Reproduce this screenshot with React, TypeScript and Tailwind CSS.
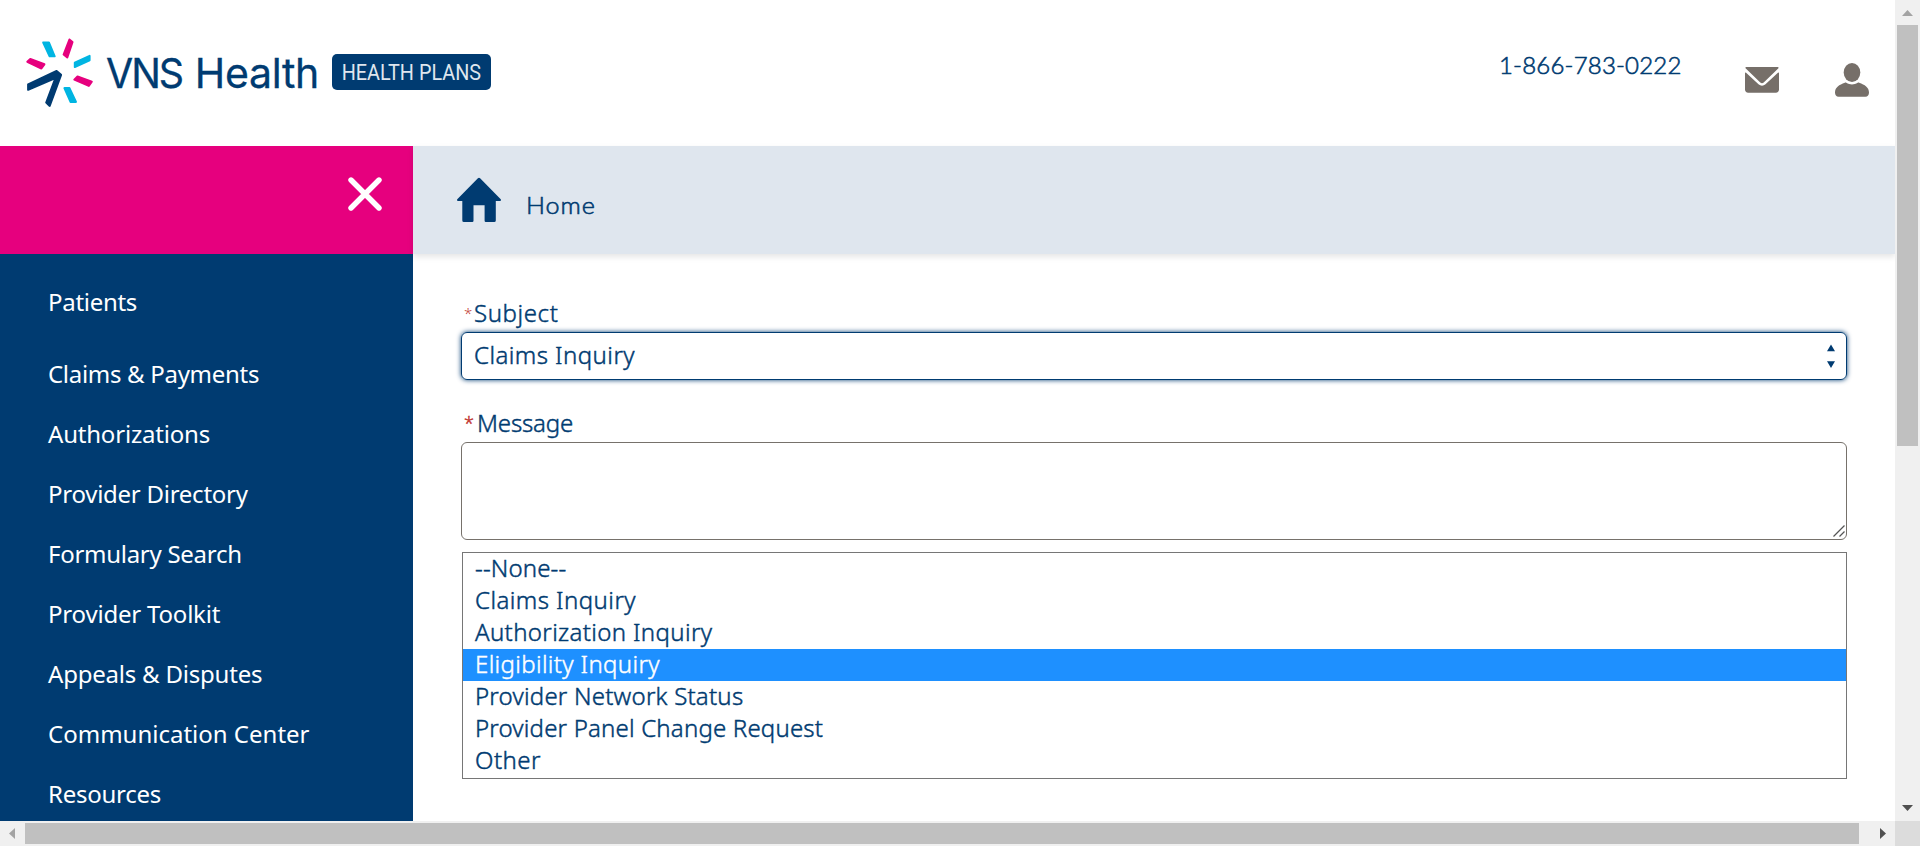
const navItems = [
  { label: 'Patients', style: 'mb-3 tracking-[-0.3px]' },
  { label: 'Claims & Payments', style: 'tracking-[-0.3px]' },
  { label: 'Authorizations', style: 'tracking-[-0.2px]' },
  { label: 'Provider Directory', style: 'tracking-[-0.26px]' },
  { label: 'Formulary Search', style: 'tracking-[-0.28px]' },
  { label: 'Provider Toolkit', style: 'tracking-[-0.2px]' },
  { label: 'Appeals & Disputes', style: 'tracking-[-0.21px]' },
  { label: 'Communication Center', style: 'tracking-[0px]' },
  { label: 'Resources', style: 'tracking-[-0.25px]' },
];

const options = [
  { label: '--None--', style: 'tracking-[0.16px]' },
  { label: 'Claims Inquiry', style: 'tracking-[0.45px]' },
  { label: 'Authorization Inquiry', style: 'tracking-[0.36px]' },
  { label: 'Eligibility Inquiry', style: 'tracking-[0.36px] bg-[#1e90ff] text-white' },
  { label: 'Provider Network Status', style: 'tracking-[0.23px]' },
  { label: 'Provider Panel Change Request', style: 'tracking-[0.19px]' },
  { label: 'Other', style: 'tracking-[0.45px]' },
];

function LogoMark() {
  return (
    <svg className="h-[71px] w-[70px]" viewBox="0 0 70 71" strokeLinejoin="round" strokeWidth="2">
      <g fill="#00b5e2" stroke="#00b5e2">
        <path d="M18.200 5.500h5.700l5.800 13.800h-5.100z" />
        <path d="M64.600 18.800v4.500L49.800 30v-4.300z" />
        <path d="M39.400 51.100h5.100l6.500 13.800h-5.500z" />
      </g>
      <g fill="#e6007e" stroke="#e6007e">
        <path d="M44.400 2.500l3.100 2.600-5.200 15.400-3.700-3z" />
        <path d="M2.300 24.800l3-2.900 14.100 5.400-3 4.200z" />
        <path d="M49.300 42.700l3.200-3.200 14.300 5.200-3 4.200z" />
      </g>
      <path fill="#003b71" stroke="#003b71" d="M3.100 47.500L31.600 34l4.500 3.800-11.400 31.100-3.500-3.300 9.200-24.600L3.100 52.800z" />
    </svg>
  );
}

function Header() {
  return (
    <header className="flex h-[146px] shrink-0 items-start">
      <div className="ml-[25px] mt-[37px] flex items-start">
        <LogoMark />
        <div className="ml-[11px] mt-[8px] flex w-[213px] whitespace-pre font-['Inter',sans-serif] text-[41px] leading-[56px] [-webkit-text-stroke:0.3px]">
          <span className="w-[89px] origin-left scale-x-[0.96] tracking-[-2.1px]">VNS</span>
          <span className="tracking-[-0.3px]">Health</span>
        </div>
        <div className="ml-[13px] mt-[17px] flex h-9 w-[159px] items-center justify-center rounded-[5px] bg-[#003b71] font-['Roboto',sans-serif] text-[22px] text-[#dfe6ee]">
          <span className="scale-x-[0.9] whitespace-nowrap pt-px">HEALTH PLANS</span>
        </div>
      </div>
      <div className="ml-auto flex">
        <span className="mr-[63px] mt-[48px] w-[183px] whitespace-nowrap font-['Lato',sans-serif] text-[24px] font-light leading-[34px] tracking-[0.2px] [-webkit-text-stroke:0.6px]">
          1-866-783-0222
        </span>
        <svg className="mr-[56px] mt-[66px] h-[28px] w-[34px]" viewBox="0 0 34 28" fill="#766f69">
          <path d="M1.300.900h31.400c.9 0 1.300.8.500 1.500L18.700 16.500c-1 1-2.400 1-3.400 0L.800 2.400C0 1.700.400.900 1.300.900z" />
          <path d="M0 7.200c0-.7.600-.9 1.100-.400L13.500 18.300c2 1.900 5 1.900 7 0L32.900 6.800c.5-.500 1.100-.3 1.100.4v16.300c0 1.900-1.300 3.200-3.200 3.200H3.200C1.300 26.700 0 25.400 0 23.500z" />
        </svg>
        <svg className="mr-[26px] mt-[63px] h-[34px] w-[34px]" viewBox="0 0 34 34" fill="#766f69">
          <ellipse cx="17" cy="9.500" rx="8.300" ry="9.500" />
          <path d="M11.300 19.800c3.700 2.300 7.700 2.300 11.400 0 .5-.3 1-.2 1.500 0 5.500 2 9.800 4.600 9.800 9.700 0 2.600-1.300 4.200-3.600 4.200H3.600C1.300 33.700 0 32.100 0 29.500c0-5.100 4.300-7.700 9.800-9.700.5-.2 1-.3 1.500 0z" />
        </svg>
      </div>
    </header>
  );
}

function Sidebar() {
  return (
    <aside className="flex w-[413px] shrink-0 flex-col bg-[#003b71]">
      <div className="flex h-[108px] shrink-0 justify-end bg-[#e6007e] pr-[31px] pt-[31px]">
        <svg className="h-[34px] w-[34px]" viewBox="0 0 34 34" stroke="#fff" strokeWidth="5.400" strokeLinecap="round">
          <path d="M3 3l28 28M31 3L3 31" />
        </svg>
      </div>
      <nav className="mt-[18px] flex flex-col pl-12 text-white">
        {navItems.map((item) => (
          <a key={item.label} className={`h-[60px] shrink-0 whitespace-nowrap leading-[60px] ${item.style}`}>
            {item.label}
          </a>
        ))}
      </nav>
    </aside>
  );
}

function Main() {
  return (
    <main className="flex min-w-0 flex-1 flex-col">
      <div className="flex h-[108px] shrink-0 items-start bg-[#dfe6ee] pl-[44px] shadow-[0_3px_6px_rgba(0,0,0,0.1)]">
        <svg className="mt-[31px] h-[46px] w-[44px]" viewBox="0 0 44 46" fill="#003b71">
          <path d="M20.900 1.300q1.100-1 2.200 0L43.500 22c.9.900.6 1.900-.5 1.900h-4.200v19.500q0 1.600-1.600 1.600h-8.400q-1.200 0-1.200-1.200V28.300H16.500v15.500q0 1.200-1.200 1.200H6.900q-1.600 0-1.600-1.600V23.900H1C-.1 23.900-.4 22.900.500 22z" />
        </svg>
        <span className="ml-[24px] mt-[42px] origin-left scale-x-[1.05] pl-px font-['Lato',sans-serif] text-[24px] font-light leading-[34px] tracking-[0.9px] [-webkit-text-stroke:0.6px]">
          Home
        </span>
      </div>
      <form className="flex flex-col px-12 pt-10 font-light [-webkit-text-stroke:0.45px]">
        <label className="flex h-[38px] pl-[3px] leading-[38px]">
          <span className="w-[10px] text-[15px] text-[#c23934] [-webkit-text-stroke:0px]">*</span>
          <span className="tracking-[0.6px]">Subject</span>
        </label>
        <div className="flex h-12 items-center justify-between rounded-[6px] border border-[#003b71] pl-3 pr-[11px] shadow-[0_0_5px_#003b71]">
          <span className="pb-[2px] tracking-[0.45px]">Claims Inquiry</span>
          <svg className="h-6 w-2" viewBox="0 0 8 24" fill="#003b71">
            <path d="M4 .500L8 7.300H0zM4 24L0 17.200h8z" />
          </svg>
        </div>
        <label className="mt-6 flex h-[38px] pl-[3px] leading-[38px]">
          <span className="w-[13px] text-[18px] text-[#c23934]">*</span>
          <span className="tracking-[-0.15px]">Message</span>
        </label>
        <div className="flex h-[98px] items-end justify-end rounded-[6px] border border-[#76716b] pb-[2px] pr-[1px]">
          <svg className="h-3 w-3" viewBox="0 0 12 12" stroke="#555" strokeWidth="1.300">
            <path d="M.500 11.500l11-11M6.500 11.500l5-5" />
          </svg>
        </div>
        <ul className="ml-px mt-3 flex h-[227px] flex-col border border-[#767676]">
          {options.map((option) => (
            <li key={option.label} className={`h-8 shrink-0 whitespace-nowrap pl-3 leading-[30px] ${option.style}`}>
              {option.label}
            </li>
          ))}
        </ul>
      </form>
    </main>
  );
}

export default function App() {
  return (
    <div className="grid h-[846px] w-[1920px] grid-cols-[1895px_25px] grid-rows-[821px_25px] overflow-hidden bg-white font-['Noto_Sans',sans-serif] text-[24px] text-[#003b71]">
      <div className="flex flex-col overflow-hidden">
        <Header />
        <div className="flex min-h-0 flex-1">
          <Sidebar />
          <Main />
        </div>
      </div>
      <div className="flex flex-col items-center bg-[#f0f0f0]">
        <svg className="h-[25px] w-[25px] shrink-0" viewBox="0 0 25 25" fill="#a3a3a3">
          <path d="M12.500 10L18 16H7z" />
        </svg>
        <div className="h-[421px] w-[21px] bg-[#c0c0c0]" />
        <svg className="mt-auto h-[25px] w-[25px]" viewBox="0 0 25 25" fill="#505050">
          <path d="M7 9h11l-5.500 6z" />
        </svg>
      </div>
      <div className="flex items-center bg-[#f0f0f0]">
        <svg className="h-[25px] w-[25px]" viewBox="0 0 25 25" fill="#a3a3a3">
          <path d="M9 12.500l6-5.500v11z" />
        </svg>
        <div className="h-[21px] w-[1834px] bg-[#c0c0c0]" />
        <svg className="ml-auto h-[25px] w-[25px]" viewBox="0 0 25 25" fill="#505050">
          <path d="M10 7l6 5.500-6 5.500z" />
        </svg>
      </div>
      <div className="bg-[#dcdcdc]" />
    </div>
  );
}
